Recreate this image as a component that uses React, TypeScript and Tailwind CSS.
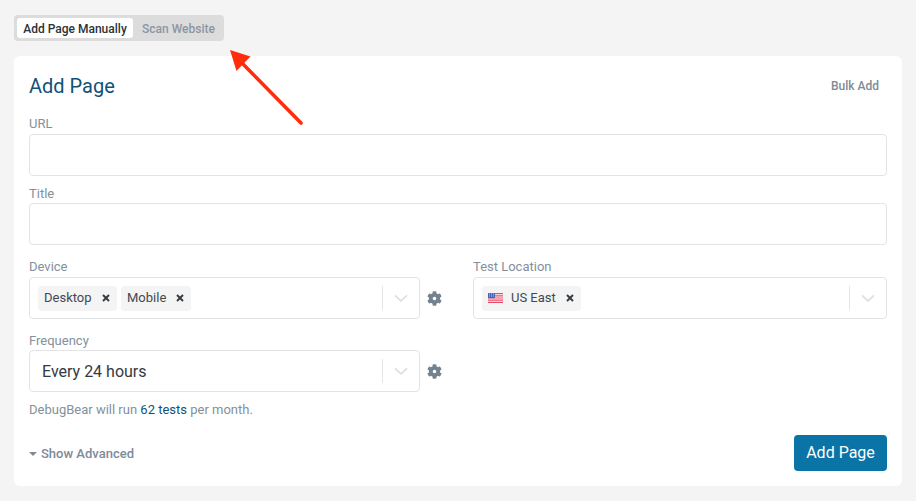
import React from "react";

const Chevron = () => (
  <svg width="18" height="18" viewBox="0 0 18 18" fill="none" stroke="#dcdfe3" strokeWidth="1.8" className="block">
    <path d="M3.5 6.8 9 11.8l5.5-5" strokeLinecap="round" />
  </svg>
);

const Gear = () => (
  <svg width="15" height="15" viewBox="0 0 512 512" fill="#74818f" className="shrink-0">
    <path d="M487.4 315.7l-42.6-24.6c4.3-23.2 4.3-47 0-70.2l42.6-24.6c4.9-2.8 7.1-8.6 5.5-14-11.1-35.6-30-67.8-54.7-94.6-3.8-4.1-10-5.1-14.8-2.3L380.8 110c-17.9-15.4-38.5-27.3-60.8-35.1V25.8c0-5.6-3.9-10.5-9.4-11.7-36.7-8.2-74.3-7.8-109.2 0-5.5 1.2-9.4 6.1-9.4 11.7V75c-22.2 7.9-42.8 19.8-60.8 35.1L88.7 85.5c-4.9-2.8-11-1.9-14.8 2.3-24.7 26.7-43.6 58.9-54.7 94.6-1.7 5.4.6 11.2 5.5 14L67.3 221c-4.3 23.2-4.3 47 0 70.2l-42.6 24.6c-4.9 2.8-7.1 8.6-5.5 14 11.1 35.6 30 67.8 54.7 94.6 3.8 4.1 10 5.1 14.8 2.3l42.6-24.6c17.9 15.4 38.5 27.3 60.8 35.1v49.2c0 5.6 3.9 10.5 9.4 11.7 36.7 8.2 74.3 7.8 109.2 0 5.5-1.2 9.4-6.1 9.4-11.7v-49.2c22.2-7.9 42.8-19.8 60.8-35.1l42.6 24.6c4.9 2.8 11 1.9 14.8-2.3 24.7-26.7 43.6-58.9 54.7-94.6 1.5-5.5-.7-11.3-5.6-14.1zM256 316c-33.1 0-60-26.9-60-60s26.9-60 60-60 60 26.9 60 60-26.9 60-60 60z" />
  </svg>
);

const Cross = () => (
  <svg width="8" height="8" viewBox="0 0 8 8" stroke="#333a42" strokeWidth="1.9" className="shrink-0">
    <path d="M1 1l6 6M7 1L1 7" />
  </svg>
);

const Flag = () => (
  <svg width="15" height="10" viewBox="0 0 15 10" className="shrink-0 mr-[8px]">
    <rect width="15" height="10" fill="#fff" />
    <path d="M0 0h15v1.2H0zM0 2.2h15v1.2H0zM0 4.4h15v1.2H0zM0 6.6h15v1.2H0zM0 8.8h15V10H0z" fill="#ea4a64" />
    <rect width="7" height="5.2" fill="#4a64b8" />
    <path d="M1 1h1M3 1h1M5 1h1M1 3h1M3 3h1M5 3h1" stroke="#d5dcf2" strokeWidth="0.8" />
  </svg>
);

const Tag = ({ children, flag, width }: { children: React.ReactNode; flag?: boolean; width: string }) => (
  <div className={`h-[25px] rounded-[4px] bg-[#f4f4f4] flex items-center pl-[6px] pr-[7px] justify-between text-[13px] text-[#414951] ${width}`}>
    <span className="flex items-center">
      {flag && <Flag />}
      {children}
    </span>
    <Cross />
  </div>
);

const Caret = () => (
  <div className="w-[37px] h-[24px] border-l border-[#e4e6e8] flex items-center justify-center">
    <Chevron />
  </div>
);

const Select = ({ children, className = "" }: { children: React.ReactNode; className?: string }) => (
  <div className={`h-[42px] flex-1 min-w-0 rounded-[4px] border border-[#e1e3e6] bg-white flex items-center ${className}`}>
    <div className="flex-1 flex items-center gap-[4px] pl-[8px]">{children}</div>
    <Caret />
  </div>
);

const Label = ({ children, className = "" }: { children: React.ReactNode; className?: string }) => (
  <div className={`text-[13px] leading-[16px] text-[#84909c] ${className}`}>{children}</div>
);

const Input = () => <div className="h-[42px] rounded-[4px] border border-[#e1e3e6] bg-white" />;

export default function App() {
  return (
    <div
      className="relative w-[916px] h-[501px] overflow-hidden bg-[#f4f4f4] pt-[15px] px-[14px]"
      style={{ fontFamily: "Roboto, sans-serif" }}
    >
      <div className="w-[210px] h-[26px] rounded-[4px] bg-[#dcdcdc] flex items-center pl-[3px] text-[12px] leading-[20px] font-medium">
        <div className="w-[116px] h-[20px] rounded-[3px] bg-white text-[#2b3138] text-center pt-[1px]">
          Add Page Manually
        </div>
        <div className="ml-[9px] pt-[1px] text-[#8b96a2]">Scan Website</div>
      </div>

      <div className="mt-[15px] w-[888px] h-[430px] rounded-[6px] bg-white px-[15px] pt-[16px]">
        <div className="flex items-center justify-between h-[28px]">
          <h1 className="text-[20px] leading-[28px] text-[#0f5279]">Add Page</h1>
          <span className="mr-[8px] text-[12px] font-medium text-[#7e8a97]">Bulk Add</span>
        </div>

        <Label className="mt-[16px]">URL</Label>
        <div className="mt-[2px]"><Input /></div>
        <Label className="mt-[10px]">Title</Label>
        <div className="mt-[1px]"><Input /></div>

        <div className="mt-[14px] flex">
          <div className="w-[413px] shrink-0">
            <Label>Device</Label>
            <div className="mt-[2px] flex items-center gap-[7px]">
              <Select>
                <Tag width="w-[79px]">Desktop</Tag>
                <Tag width="w-[70px]">Mobile</Tag>
              </Select>
              <Gear />
            </div>
          </div>
          <div className="ml-[31px] flex-1">
            <Label>Test Location</Label>
            <div className="mt-[2px] flex items-center">
              <Select>
                <Tag flag width="w-[99px]">US East</Tag>
              </Select>
            </div>
          </div>
        </div>

        <Label className="mt-[14px]">Frequency</Label>
        <div className="mt-[1px] w-[413px] flex items-center gap-[7px]">
          <Select>
            <span className="pl-[4px] pt-[1px] text-[16px] text-[#333a42]">Every 24 hours</span>
          </Select>
          <Gear />
        </div>

        <div className="mt-[10px] text-[13px] leading-[16px] text-[#84909c]">
          DebugBear will run <span className="text-[#0f5279]">62 tests</span> per month.
        </div>

        <div className="mt-[17px] flex items-center justify-between">
          <div className="flex items-center pt-[1px] text-[13px] font-medium text-[#7e8a97]">
            <svg width="8" height="4" viewBox="0 0 8 4" fill="#7e8a97" className="mr-[4px]">
              <path d="M0 0h8L4 4z" />
            </svg>
            Show Advanced
          </div>
          <button className="w-[93px] h-[36px] rounded-[4px] bg-[#0a74a6] text-white text-[16px]">Add Page</button>
        </div>
      </div>

      <svg width="90" height="90" viewBox="0 0 90 90" className="absolute left-[225px] top-[45px]" fill="#ff2d0d">
        <path d="M76 78 17 18" stroke="#ff2d0d" strokeWidth="3.6" strokeLinecap="round" />
        <path d="M5 5 25.5 11.5 11.5 26z" />
      </svg>
    </div>
  );
}
